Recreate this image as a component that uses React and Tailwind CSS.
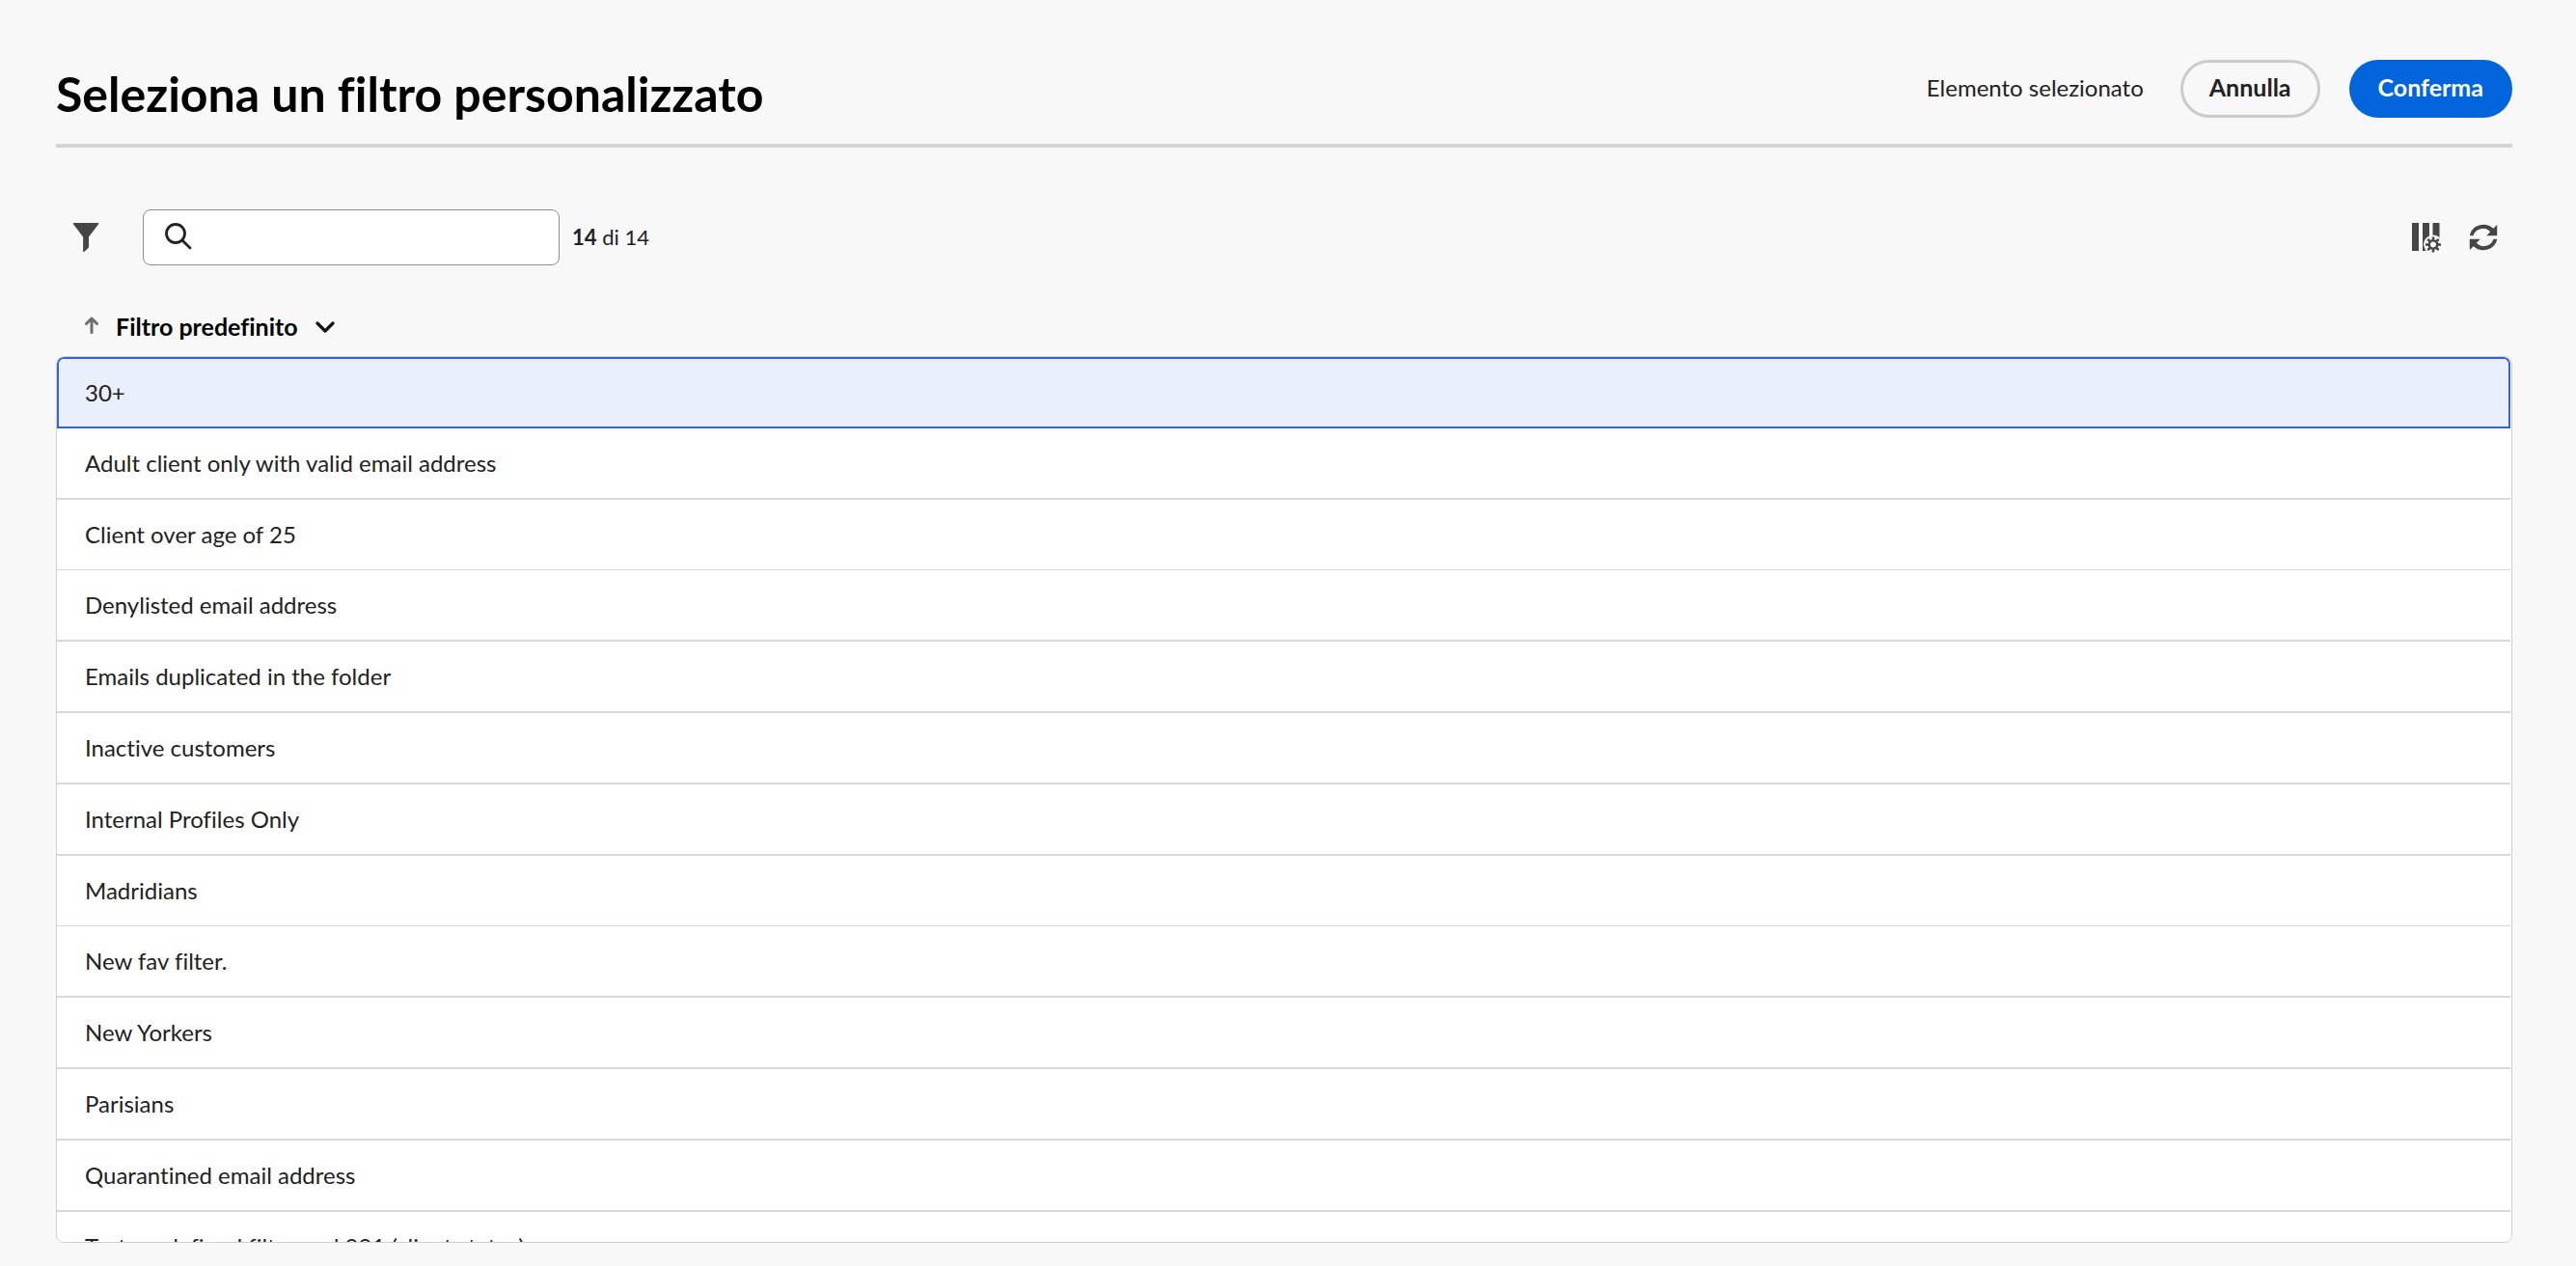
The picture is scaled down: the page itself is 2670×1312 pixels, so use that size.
const rows = [
  { name: "30+", selected: true },
  { name: "Adult client only with valid email address" },
  { name: "Client over age of 25", thin: true },
  { name: "Denylisted email address" },
  { name: "Emails duplicated in the folder" },
  { name: "Inactive customers" },
  { name: "Internal Profiles Only" },
  { name: "Madridians", thin: true },
  { name: "New fav filter." },
  { name: "New Yorkers" },
  { name: "Parisians" },
  { name: "Quarantined email address" },
  { name: "Test predefined filter and 001 (client status)" },
];

function FilterIcon() {
  return (
    <svg width="28" height="30" viewBox="0 0 28 30" fill="#464646" aria-hidden="true">
      <path d="M1.5 0h25a.8.8 0 0 1 .6 1.300L17 14.500v11L12.200 30a.6.6 0 0 1-1.100-.4V14.500L.9 1.300A.8.8 0 0 1 1.500 0Z" />
    </svg>
  );
}

function SearchIcon() {
  return (
    <svg width="28" height="28" viewBox="0 0 28 28" fill="none" stroke="#222" strokeWidth="2.800" strokeLinecap="round" aria-hidden="true">
      <circle cx="11" cy="11" r="9.500" />
      <path d="M18.200 18.200 26 26" />
    </svg>
  );
}

function ColumnsIcon() {
  const teeth = [0, 45, 90, 135, 180, 225, 270, 315];
  return (
    <svg width="32" height="32" viewBox="0 0 32 32" aria-hidden="true">
      <path fill="#464646" d="M1 1h7v29H1zM12 1h7v29h-7zM22.500 1h7v29h-7z" />
      <circle cx="23" cy="23.500" r="10" fill="#f8f8f8" />
      <path fill="#f8f8f8" d="M20 24h12v8H20z" />
      <path fill="#464646" d="M12 24h1.200a10 10 0 0 0 2.300 6H12z" />
      <circle cx="23" cy="23.500" r="4.200" fill="none" stroke="#464646" strokeWidth="2.400" />
      {teeth.map((a) => (
        <path key={a} d="M23 18.500v-3" stroke="#464646" strokeWidth="2.600" transform={`rotate(${a} 23 23.500)`} />
      ))}
    </svg>
  );
}

function RefreshIcon() {
  return (
    <svg width="30" height="28" viewBox="0 0 30 28" fill="#464646" aria-hidden="true">
      <path d="M.8 12.200A14.400 13.400 0 0 1 25.200 4.800L29.200 1v11.200H18.200l3.900-4A10.200 9.600 0 0 0 4.500 12.200Z" />
      <path d="M29.200 15.800A14.400 13.400 0 0 1 4.800 23.200L.8 27V15.800h11l-3.900 4a10.200 9.600 0 0 0 17.600-4Z" />
    </svg>
  );
}

export default function App() {
  return (
    <main className="flex h-screen flex-col bg-[#f8f8f8] pb-6 pl-[58px] pr-[66px] font-['Lato',sans-serif] text-2xl text-[#222] [font-variant-ligatures:none]">
      <header className="flex items-start justify-between border-b-4 border-[#d4d4d4] pb-[17px] pt-[62px]">
        <h1 className="text-[50px] font-bold leading-[70px] text-black">Seleziona un filtro personalizzato</h1>
        <div className="flex items-center">
          <span className="pb-0.5">Elemento selezionato</span>
          <button type="button" className="ml-[38px] h-[60px] rounded-full border-[3px] border-[#cbcbcb] px-[27px] pb-0.5 text-[25px] font-bold">
            Annulla
          </button>
          <button type="button" className="ml-[30px] h-[60px] rounded-full bg-[#0265dc] px-[30px] pb-0.5 text-[25px] font-bold text-white">
            Conferma
          </button>
        </div>
      </header>

      <div className="mt-16 flex items-center pl-[17px] pr-[15px]">
        <button type="button" aria-label="Mostra filtri">
          <FilterIcon />
        </button>
        <label className="ml-[45px] flex h-[58px] w-[432px] items-center gap-4 rounded-lg border border-[#909090] bg-white pb-0.5 pl-[22px] pr-4">
          <SearchIcon />
          <input type="search" aria-label="Cerca" className="min-w-0 flex-1 outline-none" />
        </label>
        <p className="ml-[13px] text-[22px]">
          <strong>14</strong> di 14
        </p>
        <div className="ml-auto flex items-center gap-7">
          <button type="button" aria-label="Configura colonne">
            <ColumnsIcon />
          </button>
          <button type="button" aria-label="Aggiorna">
            <RefreshIcon />
          </button>
        </div>
      </div>

      <div className="flex h-[94px] items-end pb-[10px] pl-[30px]">
        <button type="button" id="filter-column" className="flex h-10 items-center text-[25px] font-bold text-black">
          <svg className="mb-1" width="14" height="18" viewBox="0 0 14 18" fill="none" stroke="#6e6e6e" strokeWidth="3" strokeLinecap="round" strokeLinejoin="round" aria-hidden="true">
            <path d="M7 16.500V2M1.500 7.500 7 2l5.500 5.500" />
          </svg>
          <span className="ml-[18px]">Filtro predefinito</span>
          <svg className="ml-[18px]" width="20" height="12" viewBox="0 0 20 12" fill="none" stroke="#111" strokeWidth="3.200" strokeLinecap="round" strokeLinejoin="round" aria-hidden="true">
            <path d="m2 2 8 8 8-8" />
          </svg>
        </button>
      </div>

      <div className="min-h-0 flex-1 overflow-y-auto rounded-lg border border-[#d0d0d0] bg-white pr-px [scrollbar-width:none]">
        <table aria-labelledby="filter-column" className="w-full border-separate border-spacing-0">
          <tbody>
            {rows.map((row) => (
              <tr key={row.name} aria-selected={!!row.selected}>
                <td
                  className={
                    row.selected
                      ? "h-[74px] rounded-t-[7px] border-2 border-[#2f66d4] bg-[#e9effb] px-[27px] py-0"
                      : row.thin
                        ? "h-[73px] border-b border-[#dadada] px-[29px] py-0"
                        : "h-[74px] border-b-2 border-[#d8d8d8] px-[29px] py-0"
                  }
                >
                  {row.name}
                </td>
              </tr>
            ))}
          </tbody>
        </table>
      </div>
    </main>
  );
}
